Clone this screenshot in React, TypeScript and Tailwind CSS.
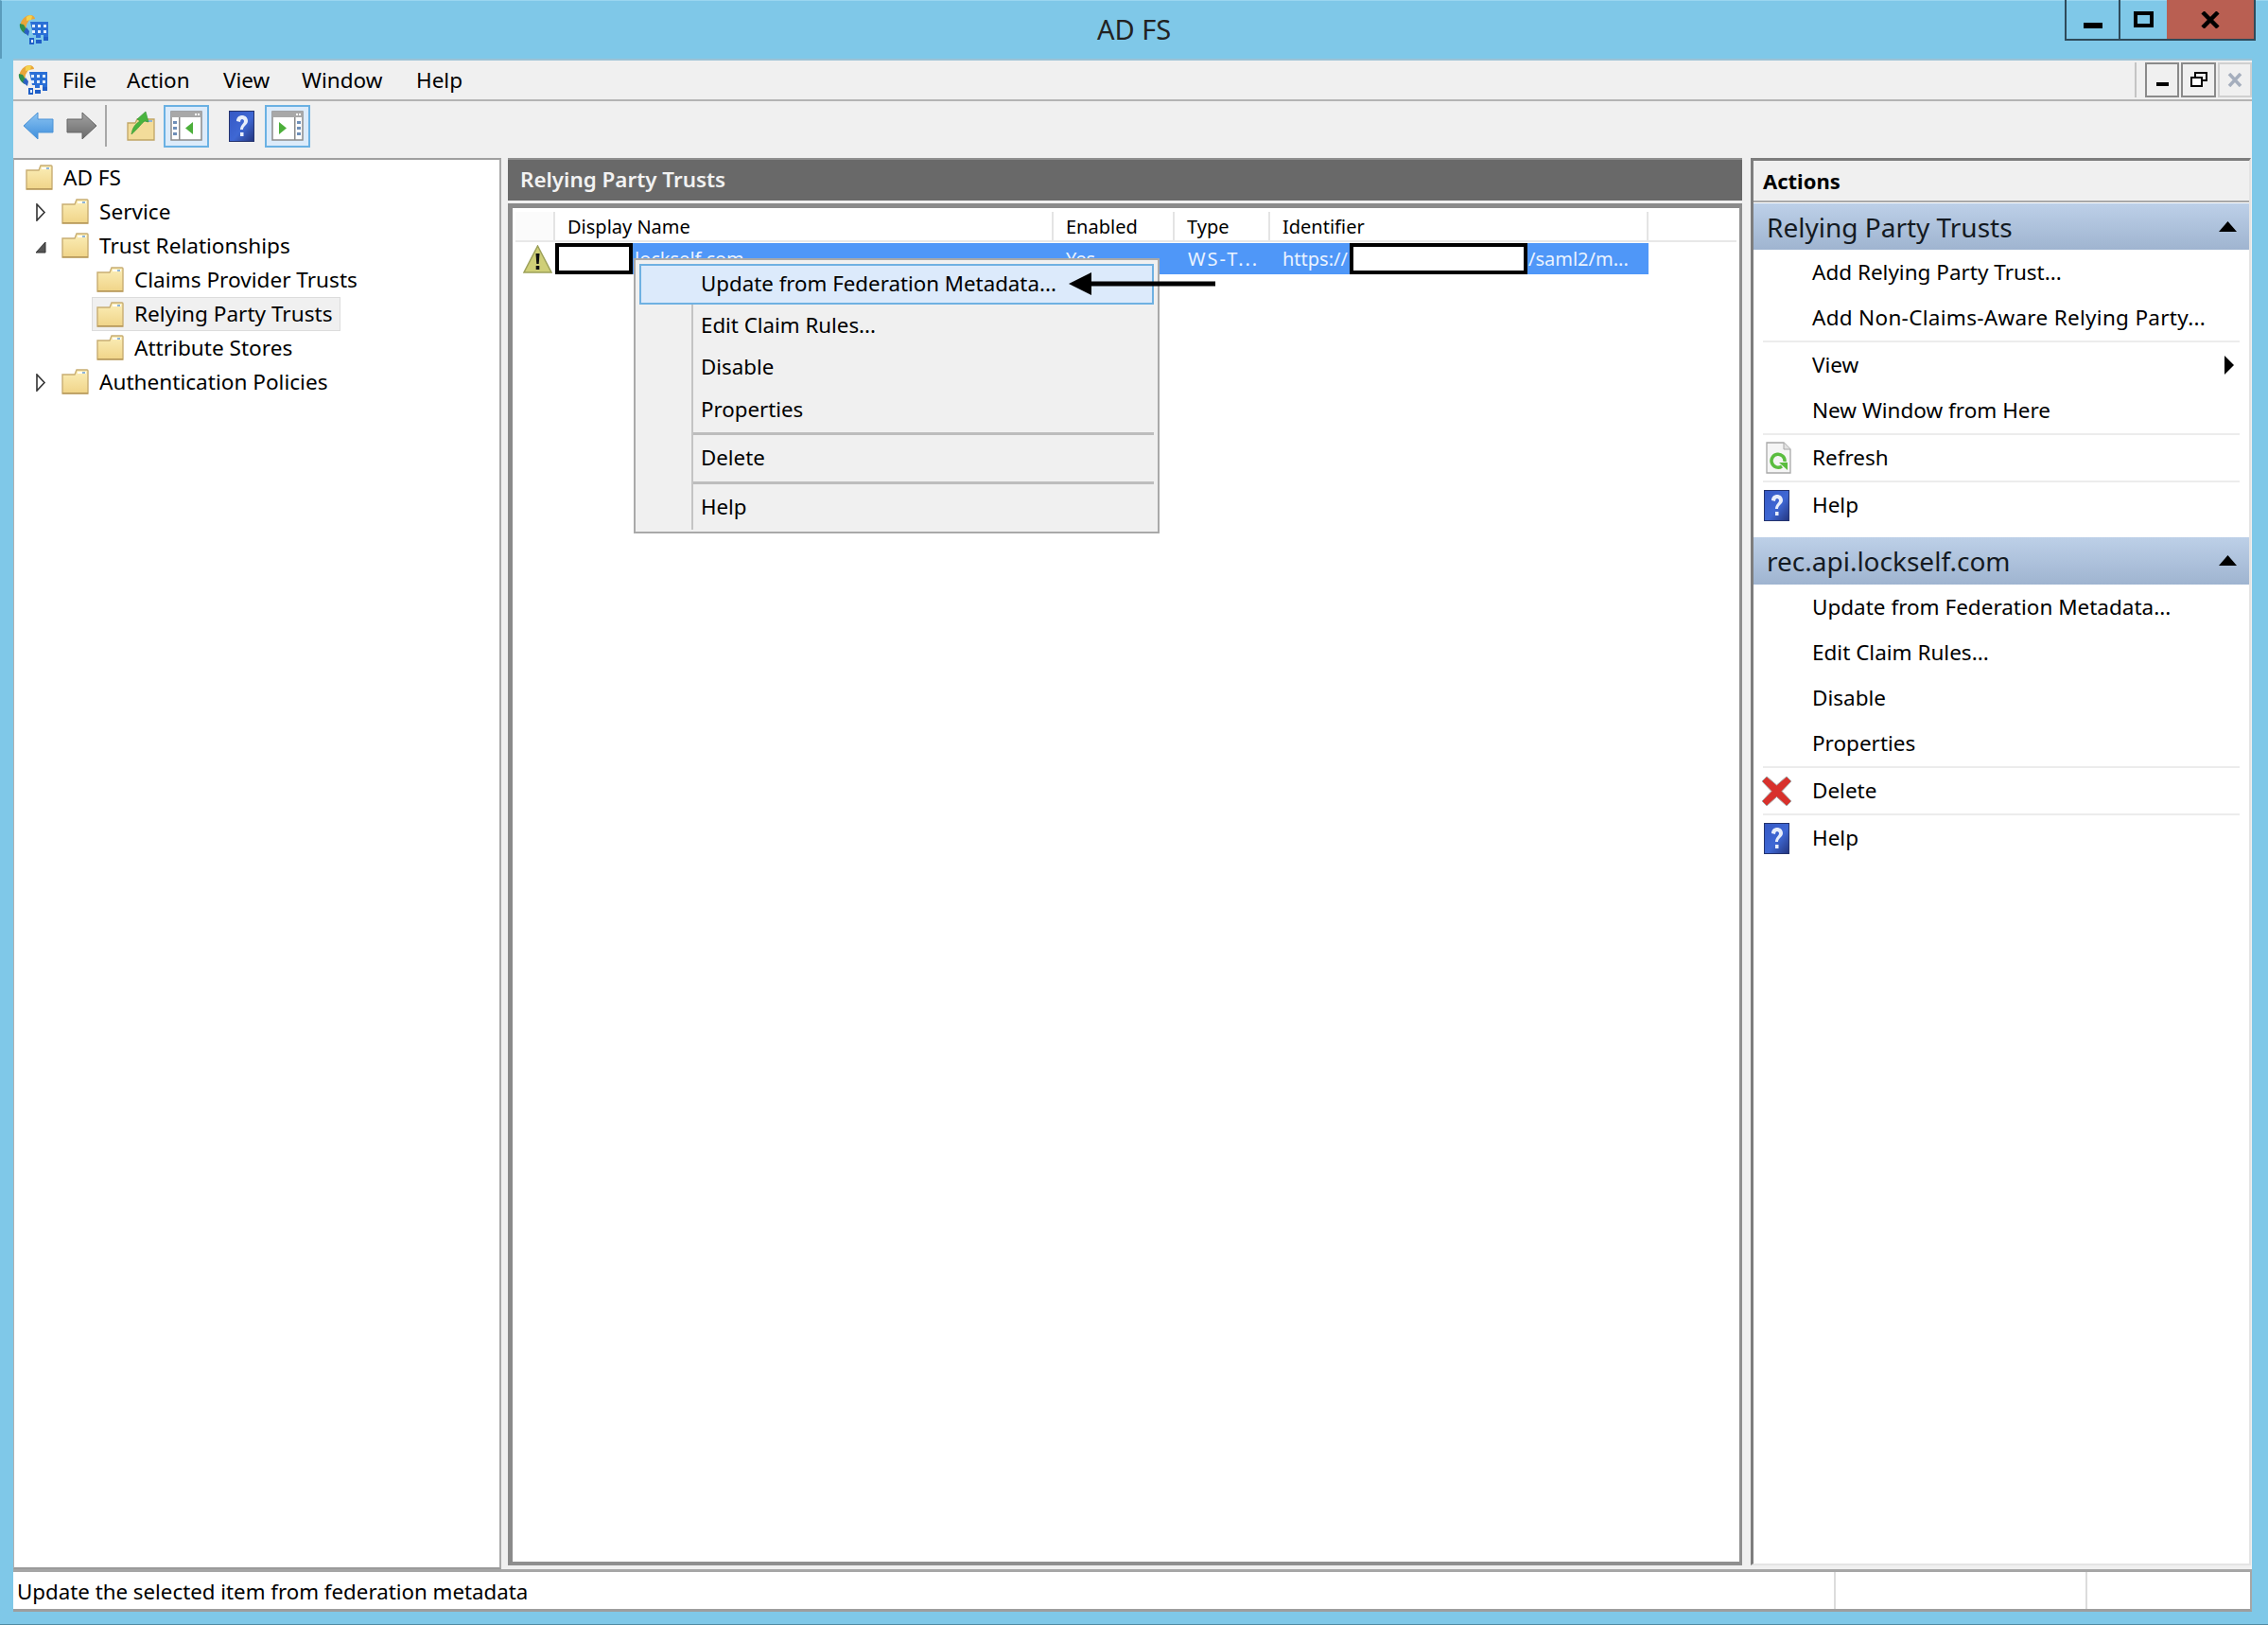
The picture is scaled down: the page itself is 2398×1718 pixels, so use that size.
import React from 'react';

const Folder = () => (
  <svg width="29" height="27" viewBox="0 0 29 27" className="shrink-0">
    <defs>
      <linearGradient id="fold" x1="0" y1="0" x2="0" y2="1">
        <stop offset="0" stopColor="#fbeeb8" />
        <stop offset="1" stopColor="#f0d488" />
      </linearGradient>
    </defs>
    <path d="M1 6h13l2-5h11a1 1 0 0 1 1 1v24H1z" fill="url(#fold)" stroke="#c8ad72" strokeWidth="1.4" />
    <path d="M17 3h9v2h-9z" fill="#ffffff" />
    <path d="M22 3h3v2h-3z" fill="#8fb5d8" />
    <path d="M1 25h27v1.5H1z" fill="#b89a5c" />
  </svg>
);

const AppIcon = () => (
  <svg width="33" height="33" viewBox="0 0 33 33" className="shrink-0">
    <path d="M3 9c2-5 6-8 10-8 3 0 5 2 5 4l-6 1-3 5-1 7c-3-2-6-5-5-9z" fill="#e9a63a" />
    <path d="M9 3c2-2 5-2 6-1l-1 4-5 1z" fill="#f4d24c" />
    <path d="M2 10c-1 4 2 9 6 11l1-5-3-5z" fill="#2f8f4e" />
    <path d="M6 19l5 4 1-5-3-4z" fill="#2a5fc4" />
    <path d="M13 8h19v17h-5v-3h-3v3h-5v-3h-3z" fill="#2a6fd6" />
    <path d="M15 11h3v3h-3zM21 11h3v3h-3zM27 11h3v3h-3zM15 17h3v3h-3zM21 17h3v3h-3zM27 17h3v3h-3z" fill="#dfeeff" />
    <path d="M12 25h5v7h-5zM19 27h6v4h-6zM27 24h5v4h-5z" fill="#1f5fc8" />
    <path d="M14 27h2v3h-2z" fill="#dfeeff" />
  </svg>
);

const HelpIcon = ({ className = '' }: { className?: string }) => (
  <svg width="27" height="33" viewBox="0 0 27 33" className={className}>
    <defs>
      <linearGradient id="hlp" x1="0" y1="0" x2="1" y2="1">
        <stop offset="0" stopColor="#3558c4" />
        <stop offset="0.55" stopColor="#3f68d4" />
        <stop offset="1" stopColor="#23357e" />
      </linearGradient>
    </defs>
    <rect x="0.5" y="0.5" width="26" height="32" fill="url(#hlp)" stroke="#25346f" />
    <path d="M8 11c0-4 3-6 6-6s6 2 6 6c0 4-5 5-5 9h-3c0-5 4-6 4-9 0-1-1-2-2-2s-2 1-2 3z" fill="#e8eefb" />
    <rect x="12" y="23" width="3.5" height="4" fill="#e8eefb" />
  </svg>
);

const NavArrow = ({ left }: { left?: boolean }) => (
  <svg width="33" height="30" viewBox="0 0 33 30" className={left ? '' : '-scale-x-100'}>
    <defs>
      <linearGradient id="navb" x1="0" y1="0" x2="0" y2="1">
        <stop offset="0" stopColor="#8cc4f2" />
        <stop offset="1" stopColor="#3f8fdc" />
      </linearGradient>
      <linearGradient id="navg" x1="0" y1="0" x2="0" y2="1">
        <stop offset="0" stopColor="#a2a2a2" />
        <stop offset="1" stopColor="#6a6a6a" />
      </linearGradient>
    </defs>
    <path d="M1 15 16 1v7h16v14H16v7z" fill={left ? 'url(#navb)' : 'url(#navg)'} stroke={left ? '#4c93d6' : '#666666'} />
  </svg>
);

const UpFolder = () => (
  <svg width="30" height="32" viewBox="0 0 30 32">
    <path d="M1 13h8l2-4h18v22H1z" fill="#f3dc9a" stroke="#c0a566" strokeWidth="1.3" />
    <path d="M20 10h7v2h-7z" fill="#8fb5d8" />
    <path d="M5 25c1-7 4-11 9-14l-3-2 9-8 3 11-4-1c-4 3-7 8-14 14z" fill="#49b43e" stroke="#2f8f30" strokeWidth="0.6" />
  </svg>
);

const PaneIcon = ({ right }: { right?: boolean }) => (
  <svg width="34" height="32" viewBox="0 0 34 32">
    <rect x="1" y="1" width="32" height="30" fill="#ffffff" stroke="#8a8a8a" strokeWidth="1.5" />
    <rect x="1" y="1" width="32" height="6" fill="#a8a8a8" />
    <path d="M26 3h2v2h-2zM29 3h2v2h-2z" fill="#ffffff" />
    {right ? (
      <>
        <rect x="24" y="7" width="1.5" height="24" fill="#8a8a8a" />
        <path d="M27 11h4v3h-4zM27 17h4v3h-4zM27 23h4v3h-4z" fill="#6f8fb8" />
        <path d="M8 12v13l8-6.5z" fill="#4caf3a" />
      </>
    ) : (
      <>
        <rect x="9" y="7" width="1.5" height="24" fill="#8a8a8a" />
        <path d="M3 11h4v3H3zM3 17h4v3H3zM3 23h4v3H3z" fill="#6f8fb8" />
        <path d="M24 12v13l-8-6.5z" fill="#4caf3a" />
      </>
    )}
  </svg>
);

const WarnIcon = () => (
  <svg width="31" height="30" viewBox="0 0 31 30" className="shrink-0">
    <path d="M15.5 1 30 29H1z" fill="#cfcf78" stroke="#9da15a" strokeWidth="1.5" />
    <path d="M13.5 9h4l-.8 11h-2.4z" fill="#111111" />
    <rect x="13.7" y="22" width="3.6" height="4" fill="#111111" />
  </svg>
);

const RefreshIcon = () => (
  <svg width="27" height="34" viewBox="0 0 27 34" className="ml-[4px]">
    <path d="M1 1h18l7 7v25H1z" fill="#f5f5f5" stroke="#a8a8a8" strokeWidth="1.3" />
    <path d="M19 1v7h7" fill="#e2e2e2" stroke="#a8a8a8" strokeWidth="1" />
    <path d="M20 21a7 7 0 1 0-3 5" fill="none" stroke="#5abd3f" strokeWidth="3.5" />
    <path d="M14 22h9v8z" fill="#5abd3f" />
  </svg>
);

const DeleteIcon = () => (
  <svg width="33" height="33" viewBox="0 0 33 33">
    <path d="M6 1l10.5 9L27 1l5 5-10 10.5L32 27l-5 5-10.5-9.5L6 32l-5-5 10-10.5L1 6z" fill="#d8312c" stroke="#a8a8a8" strokeWidth="1" />
  </svg>
);

const Expander = ({ open }: { open?: boolean }) => (
  <svg width="12" height="19" viewBox="0 0 12 19" className="shrink-0">
    {open ? (
      <path d="M11 5v11H1z" fill="#555555" stroke="#333333" />
    ) : (
      <path d="M2 1v17l8-8.5z" fill="#ffffff" stroke="#333333" strokeWidth="1.6" />
    )}
  </svg>
);

const treeRows = [
  { label: 'AD FS', indent: 'pl-[12px]' },
  { label: 'Service', indent: 'pl-[22px]', expander: 'closed' },
  { label: 'Trust Relationships', indent: 'pl-[22px]', expander: 'open' },
  { label: 'Claims Provider Trusts', indent: 'pl-[87px]' },
  { label: 'Relying Party Trusts', indent: 'pl-[87px]', selected: true },
  { label: 'Attribute Stores', indent: 'pl-[87px]' },
  { label: 'Authentication Policies', indent: 'pl-[22px]', expander: 'closed' },
];

const Tree = () => (
  <div className="w-[516px] bg-white border-t-2 border-l border-r-2 border-b-2 border-t-[#a0a0a0] border-l-[#b0b0b0] border-r-[#a8a8a8] border-b-[#9a9a9a] pt-[1px]">
    {treeRows.map((r) => (
      <div key={r.label} className={`h-[36px] flex items-center ${r.indent}`}>
        {r.expander && (
          <div className="w-[28px] flex">
            <Expander open={r.expander === 'open'} />
          </div>
        )}
        <div
          className={
            r.selected
              ? 'flex items-center h-[36px] -ml-[5px] pl-[4px] pr-[8px] bg-[#f0f0f0] border border-[#dcdcdc]'
              : 'flex items-center'
          }
        >
          <Folder />
          <span className="ml-[11px] text-[22.6px] text-black whitespace-nowrap">{r.label}</span>
        </div>
      </div>
    ))}
  </div>
);

const ContextMenu = () => (
  <div className="absolute left-[133px] top-[106px] w-[556px] h-[291px] bg-[#f0f0f0] border-2 border-[#a9a9a9] p-[4px] text-[22.3px] text-black">
    <div className="h-[43px] flex items-center pl-[65px] pb-[2px] bg-[#dceafb] border-2 border-[#6fb1e2]">
      <span className="-ml-[2px]">Update from Federation Metadata...</span>
    </div>
    <div className="ml-[55px] border-l-2 border-[#c4c4c4]">
      {['Edit Claim Rules...', 'Disable', 'Properties'].map((t) => (
        <div key={t} className="h-[44.5px] flex items-center pl-[8px] pb-[2px]">{t}</div>
      ))}
      <div className="h-[3px] bg-[#bdbdbd] mt-[1px]" />
      <div className="h-[49px] flex items-center pl-[8px]">Delete</div>
      <div className="h-[3px] bg-[#bdbdbd]" />
      <div className="h-[48px] flex items-center pl-[8px]">Help</div>
    </div>
  </div>
);

const columns = [
  { label: 'Display Name', w: 'w-[527px]' },
  { label: 'Enabled', w: 'w-[128px]' },
  { label: 'Type', w: 'w-[101px]' },
  { label: 'Identifier', w: 'w-[400px]' },
];

const TrustList = () => (
  <div className="flex-1 mt-[3px] bg-white border-t-[5px] border-l-[5px] border-b-[4px] border-r-[3px] border-t-[#8a8a8a] border-l-[#8a8a8a] border-b-[#8f8f8f] border-r-[#8f8f8f] pt-[4px] pl-[3px] pr-[3px]">
    <div className="flex h-[32px] border-b-2 border-[#e8e8e8] text-[20px] text-black">
      <div className="w-[42px] bg-[#fbfbfb] border-r-2 border-[#e4e4e4]" />
      {columns.map((c) => (
        <div key={c.label} className={`${c.w} flex items-center pl-[13px] pt-[2px] border-r-2 border-[#e4e4e4] bg-white`}>{c.label}</div>
      ))}
    </div>
    <div className="relative h-[33px] mt-[1px] flex items-center">
      <div className="w-[42px] flex pl-[8px]">
        <WarnIcon />
      </div>
      <div className="flex w-[1156px] h-[33px] items-center bg-[#4f97f8] text-[20px] text-[#eaf3ff]">
        <div className="w-[527px] pl-[84px]">lockself.com</div>
        <div className="w-[128px] pl-[13px]">Yes</div>
        <div className="w-[101px] pl-[14px] tracking-[2px]">WS-T...</div>
        <div className="w-[400px] pl-[13px] flex">
          <span className="w-[260px]">https://</span>
          <span>/saml2/m...</span>
        </div>
      </div>
      <div className="absolute left-[42px] top-0 w-[82px] h-[33px] bg-white border-[4px] border-black" />
      <div className="absolute left-[882px] top-0 w-[188px] h-[33px] bg-white border-[4px] border-black" />
    </div>
  </div>
);

type ActionRow = { label: string; icon?: 'refresh' | 'help' | 'delete'; sub?: boolean; wide?: boolean };

const ActionItem = ({ label, icon, sub, wide }: ActionRow) => (
  <div className={`relative h-[48px] flex items-center pl-[62px] text-[22.5px] text-black whitespace-nowrap ${wide ? 'tracking-[0.3px]' : ''}`}>
    {icon && (
      <div className="absolute left-[6px] top-0 h-full w-[36px] flex items-center justify-center">
        {icon === 'refresh' && <RefreshIcon />}
        {icon === 'help' && <HelpIcon />}
        {icon === 'delete' && <DeleteIcon />}
      </div>
    )}
    {label}
    {sub && (
      <svg width="12" height="20" viewBox="0 0 12 20" className="absolute right-[15px] top-[14px]">
        <path d="M1 0v20l10-10z" fill="#000000" />
      </svg>
    )}
  </div>
);

const Sep = () => <div className="h-[2px] mx-[10px] bg-[#ececec]" />;

const SectionHeader = ({ title, className = '' }: { title: string; className?: string }) => (
  <div className={`flex items-center justify-between pl-[14px] pr-[13px] bg-gradient-to-b from-[#bdd0e8] to-[#9fb4d0] text-[28px] text-[#141a22] ${className}`}>
    <span>{title}</span>
    <svg width="19" height="12" viewBox="0 0 19 12">
      <path d="M9.5 0 19 11H0z" fill="#000000" />
    </svg>
  </div>
);

const ActionsPane = () => (
  <div className="w-[529px] ml-[9px] mb-[4px] bg-white border-t-[3px] border-l-[3px] border-r-2 border-b-2 border-t-[#7d7d7d] border-l-[#7d7d7d] border-r-[#e4e4e4] border-b-[#e4e4e4] flex flex-col">
    <div className="h-[44px] shrink-0 flex items-center pl-[10px] bg-[#f0f0f0] text-[22px] font-bold text-black border-b-2 border-[#a9a9a9]">Actions</div>
    <SectionHeader title="Relying Party Trusts" className="h-[49px] mt-[1px]" />
    <ActionItem label="Add Relying Party Trust..." />
    <ActionItem label="Add Non-Claims-Aware Relying Party..." wide />
    <Sep />
    <ActionItem label="View" sub />
    <ActionItem label="New Window from Here" />
    <Sep />
    <ActionItem label="Refresh" icon="refresh" />
    <Sep />
    <ActionItem label="Help" icon="help" />
    <SectionHeader title="rec.api.lockself.com" className="h-[50px] mt-[10px]" />
    <ActionItem label="Update from Federation Metadata..." />
    <ActionItem label="Edit Claim Rules..." />
    <ActionItem label="Disable" />
    <ActionItem label="Properties" />
    <Sep />
    <ActionItem label="Delete" icon="delete" />
    <Sep />
    <ActionItem label="Help" icon="help" />
  </div>
);

export default function App() {
  return (
    <div className="w-[2398px] h-[1718px] flex flex-col bg-[#7fc8e8] border-b border-[#4f8aa3] font-['Noto_Sans',sans-serif] overflow-hidden">
      {/* caption */}
      <div className="h-[62px] shrink-0 grid grid-cols-[1fr_auto_1fr] border-l-2 border-t border-l-[#5a9cbc] border-t-[#9ad6f0]">
        <div className="pl-[17px] pt-[14px]">
          <AppIcon />
        </div>
        <div className="flex items-center text-[29px] text-[#222222] pb-[1px] pr-[2px]">AD FS</div>
        <div className="flex justify-end items-start pr-[13px]">
          <div className="flex h-[43px] -mt-[1px] border-l-2 border-b-2 border-r-2 border-[#2e4a5a]">
            <div className="w-[55px] h-full flex items-center justify-center pt-[12px]">
              <div className="w-[20px] h-[6px] bg-black" />
            </div>
            <div className="w-[51px] h-full border-l-2 border-[#2e4a5a] flex items-center justify-center">
              <div className="w-[21px] h-[17px] border-[4px] border-black" />
            </div>
            <div className="w-[92px] h-full bg-[#b95f52] flex items-center justify-center">
              <svg width="20" height="18" viewBox="0 0 20 18">
                <path d="M2 1l16 16M18 1 2 17" stroke="#000000" strokeWidth="4.5" />
              </svg>
            </div>
          </div>
        </div>
      </div>

      <div className="flex-1 min-h-0 ml-[14px] mr-[17px] flex flex-col bg-[#f0f0f0]">
        {/* menu */}
        <div className="h-[45px] shrink-0 flex items-center border-t-2 border-b-2 border-t-[#9cc3d6] border-b-[#b4b4b4] text-[22.5px] text-black">
          <div className="pl-[4px] w-[52px]">
            <AppIcon />
          </div>
          <span className="w-[68px]">File</span>
          <span className="w-[102px]">Action</span>
          <span className="w-[83px]">View</span>
          <span className="w-[121px]">Window</span>
          <span>Help</span>
          <div className="ml-auto flex h-[37px] pl-[9px] gap-[2px] border-l-2 border-[#c4c4c4]">
            <div className="w-[36px] border-2 border-[#8a8a8a] flex items-center justify-center pt-[8px]">
              <div className="w-[13px] h-[4px] bg-black" />
            </div>
            <div className="w-[37px] border-2 border-[#8a8a8a] flex items-center justify-center">
              <svg width="18" height="17" viewBox="0 0 18 17">
                <path d="M5 6V1h12v8h-5" fill="none" stroke="#000000" strokeWidth="2" />
                <rect x="1" y="6" width="11" height="9" fill="#ffffff" stroke="#000000" strokeWidth="2" />
              </svg>
            </div>
            <div className="w-[36px] border-2 border-[#d0d0d0] flex items-center justify-center">
              <svg width="16" height="15" viewBox="0 0 16 15">
                <path d="M2 1l12 13M14 1 2 14" stroke="#a5aebd" strokeWidth="3.5" />
              </svg>
            </div>
          </div>
        </div>

        {/* toolbar */}
        <div className="h-[60px] shrink-0 flex items-center pl-[10px] pb-[8px]">
          <NavArrow left />
          <div className="ml-[13px]">
            <NavArrow />
          </div>
          <div className="ml-[8px] w-[2px] h-[44px] bg-[#a8a8a8]" />
          <div className="ml-[21px]">
            <UpFolder />
          </div>
          <div className="ml-[9px] w-[48px] h-[45px] bg-[#dcebfa] border-2 border-[#6ab1e3] flex items-center justify-center">
            <PaneIcon />
          </div>
          <HelpIcon className="ml-[21px]" />
          <div className="ml-[11px] w-[48px] h-[45px] bg-[#dcebfa] border-2 border-[#6ab1e3] flex items-center justify-center">
            <PaneIcon right />
          </div>
        </div>

        {/* panes */}
        <div className="flex-1 min-h-0 flex">
          <Tree />
          <div className="relative w-[1305px] ml-[7px] mb-[4px] flex flex-col">
            <div className="h-[45px] shrink-0 flex items-center pl-[13px] pb-[2px] bg-[#696969] border-t-2 border-[#8f8f8f] text-[22.4px] font-semibold text-[#f2f2f2]">
              Relying Party Trusts
            </div>
            <TrustList />
            <ContextMenu />
            <svg width="155" height="24" viewBox="0 0 155 24" className="absolute left-[593px] top-[121px]">
              <path d="M0 12 24 0v9.5h131v5H24V24z" fill="#000000" />
            </svg>
          </div>
          <ActionsPane />
        </div>

        {/* status */}
        <div className="h-[45px] shrink-0 flex bg-white border-t-[3px] border-b-[3px] border-t-[#a6a6a6] border-b-[#9e9e9e] border-r-2 border-r-[#a6a6a6] text-[22.3px] text-black">
          <div className="flex-1 flex items-center pl-[4px] pt-[2px] border-r-2 border-[#dcdcdc]">Update the selected item from federation metadata</div>
          <div className="w-[266px] border-r-2 border-[#dcdcdc]" />
          <div className="w-[172px]" />
        </div>
      </div>
      <div className="h-[13px] shrink-0" />
    </div>
  );
}
